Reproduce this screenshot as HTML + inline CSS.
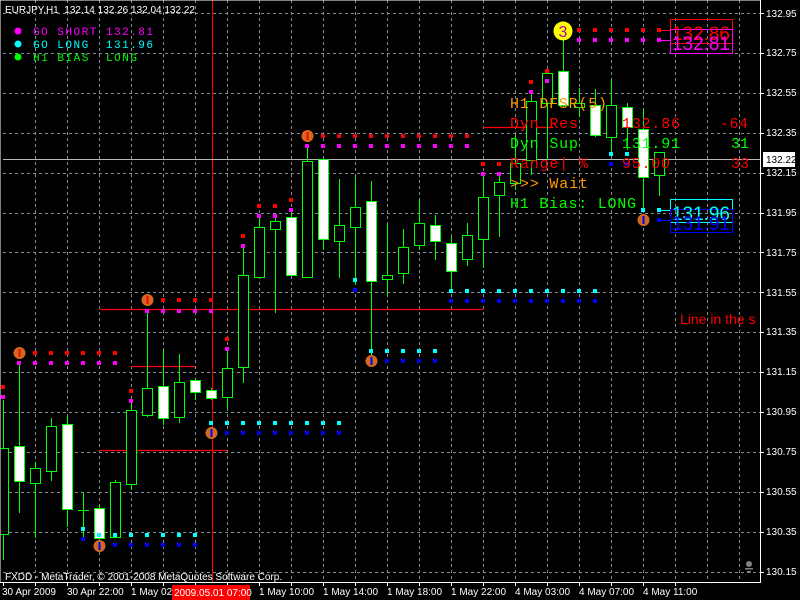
<!DOCTYPE html>
<html><head><meta charset="utf-8"><style>
html,body{margin:0;padding:0;background:#000;width:800px;height:600px;overflow:hidden}
svg{display:block}
text{white-space:pre}
.ax{font-family:"Liberation Sans",sans-serif;font-size:10px;fill:#fff}
.mono{font-family:"Liberation Mono",monospace}
</style></head><body>
<svg id="s" width="800" height="600" xmlns="http://www.w3.org/2000/svg">
<rect width="800" height="600" fill="#000"/>
<g id="grid" stroke="#7f8c99" stroke-dasharray="3,3" stroke-width="1"></g>
<line x1="212.5" y1="0" x2="212.5" y2="582" stroke="#ff0000"/>
<line x1="3" y1="159.5" x2="760" y2="159.5" stroke="#b8b8b8"/>
<g stroke="#ff0000" stroke-width="1.2">
<line x1="100" y1="309.5" x2="483" y2="309.5"/>
<line x1="131" y1="366.5" x2="195" y2="366.5"/>
<line x1="99" y1="450.5" x2="227" y2="450.5"/>
<line x1="483" y1="127.5" x2="553" y2="127.5"/>
<line x1="480" y1="213.5" x2="490" y2="213.5"/>
</g>
<g id="candles"></g>
<g id="dots"></g>
<!-- circles -->
<g id="circ"></g>
<circle cx="563" cy="31" r="9.5" fill="#ffff00"/>
<text x="563" y="37" text-anchor="middle" font-family="Liberation Sans,sans-serif" font-size="16" fill="#b000b0">3</text>

<!-- label boxes -->
<line x1="659" y1="30.5" x2="670" y2="30.5" stroke="#ff0000"/>
<line x1="659" y1="40.5" x2="670" y2="40.5" stroke="#ff00ff"/>
<rect x="670.5" y="19.5" width="62" height="24" fill="none" stroke="#ff0000"/>
<rect x="670.5" y="29.5" width="62" height="24" fill="none" stroke="#ff00ff"/>
<text x="672" y="40" font-family="Liberation Sans,sans-serif" font-size="19" fill="#ff0000" textLength="58">132.86</text>
<text x="672" y="50" font-family="Liberation Sans,sans-serif" font-size="19" fill="#ff00ff" textLength="58">132.81</text>
<line x1="659" y1="210.5" x2="670" y2="210.5" stroke="#00ffff"/>
<line x1="659" y1="220.5" x2="670" y2="220.5" stroke="#0000ff"/>
<rect x="670.5" y="199.5" width="62" height="23" fill="none" stroke="#00ffff"/>
<rect x="670.5" y="209.5" width="62" height="23" fill="none" stroke="#0000ff"/>
<text x="672" y="220" font-family="Liberation Sans,sans-serif" font-size="19" fill="#00ffff" textLength="58">131.96</text>
<text x="672" y="230" font-family="Liberation Sans,sans-serif" font-size="19" fill="#0000ff" textLength="58">131.91</text>

<!-- DFSR panel -->
<g class="mono" font-size="15">
<text x="510" y="108" fill="#ff9900" textLength="97">H1 DFSR(5)</text>
<text x="510" y="128" fill="#ff0000" textLength="68">Dyn Res</text>
<text x="622" y="128" fill="#ff0000" textLength="58">132.86</text>
<text x="720" y="128" fill="#ff0000" textLength="28">-64</text>
<text x="510" y="148" fill="#00ff00" textLength="68">Dyn Sup</text>
<text x="622" y="148" fill="#00ff00" textLength="58">131.91</text>
<text x="731" y="148" fill="#00ff00" textLength="18">31</text>
<text x="510" y="168" fill="#ff0000" textLength="78">Range| %</text>
<text x="622" y="168" fill="#ff0000" textLength="48">95.00</text>
<text x="731" y="168" fill="#ff0000" textLength="18">33</text>
<text x="510" y="188" fill="#ff9900" textLength="78">&gt;&gt;&gt; Wait</text>
<text x="510" y="208" fill="#00ff00" textLength="126">H1 Bias: LONG</text>
</g>
<text x="680" y="324" font-family="Liberation Sans,sans-serif" font-size="14" fill="#ff0000">Line in the s</text>

<!-- legend -->
<text x="5" y="13" class="ax" font-size="10">EURJPY,H1  132.14 132.26 132.04 132.22</text>
<circle cx="18" cy="31" r="3.5" fill="#ff00ff"/>
<circle cx="18" cy="44" r="3.5" fill="#00ffff"/>
<circle cx="18" cy="57" r="3.5" fill="#00ff00"/>
<g class="mono" font-size="11">
<text x="33" y="35" fill="#ff00ff" textLength="120">GO SHORT 132.81</text>
<text x="33" y="48" fill="#00ffff" textLength="120">GO LONG  131.96</text>
<text x="33" y="61" fill="#00ff00" textLength="104">H1 BIAS  LONG</text>
</g>

<!-- borders -->
<rect x="0" y="0" width="760.5" height="582.5" fill="none" stroke="#fff" stroke-width="1"/>
<text x="5" y="580" class="ax" font-size="9.5">FXDD - MetaTrader, © 2001-2008 MetaQuotes Software Corp.</text>
<g fill="#808080"><circle cx="749" cy="564" r="3"/><rect x="745" y="568" width="8" height="1.5"/><rect x="747" y="571" width="4" height="1.5"/></g>

<!-- axis -->
<g id="ticks" stroke="#fff"></g>
<g class="ax">
<text x="766" y="17">132.95</text><text x="766" y="56">132.75</text><text x="766" y="96">132.55</text>
<text x="766" y="136">132.35</text><text x="766" y="176">132.15</text><text x="766" y="216">131.95</text>
<text x="766" y="256">131.75</text><text x="766" y="296">131.55</text><text x="766" y="335">131.35</text>
<text x="766" y="375">131.15</text><text x="766" y="415">130.95</text><text x="766" y="455">130.75</text>
<text x="766" y="495">130.55</text><text x="766" y="535">130.35</text><text x="766" y="575">130.15</text>
</g>
<rect x="763" y="152" width="32" height="15" fill="#fff"/>
<text x="766" y="163" class="ax" style="fill:#000">132.22</text>
<g class="ax">
<text x="2" y="595">30 Apr 2009</text>
<text x="67" y="595">30 Apr 22:00</text>
<text x="131" y="595">1 May 02:</text>
<text x="259" y="595">1 May 10:00</text>
<text x="323" y="595">1 May 14:00</text>
<text x="387" y="595">1 May 18:00</text>
<text x="451" y="595">1 May 22:00</text>
<text x="515" y="595">4 May 03:00</text>
<text x="579" y="595">4 May 07:00</text>
<text x="643" y="595">4 May 11:00</text>
</g>
<rect x="172" y="585" width="78" height="15" fill="#ff0000"/>
<text x="174" y="596" class="ax">2009.05.01 07:00</text>
</svg>
<script>
var NS="http://www.w3.org/2000/svg";
function el(p,t,a){var e=document.createElementNS(NS,t);for(var k in a)e.setAttribute(k,a[k]);document.getElementById(p).appendChild(e);return e;}
// grid
for(var k=1;k<=23;k++){var x=3+32*k+0.5;el("grid","line",{x1:x,y1:0,x2:x,y2:582});}
for(var k=0;k<15;k++){var y=Math.round(13+39.9*k)+0.5;el("grid","line",{x1:3,y1:y,x2:760,y2:y});}
// ticks
for(var k=0;k<15;k++){var y=Math.round(13+39.9*k)+0.5;el("ticks","line",{x1:760,y1:y,x2:764,y2:y});}
for(var k=0;k<=21;k++){var x=3+32*k+0.5;el("ticks","line",{x1:x,y1:582,x2:x,y2:586});}
// candles: x, high, low, top, bottom, white
var C=[[3,400,560,448,534,0],[19,363,513,446,481,1],[35,462,538,468,483,0],[51,418,481,426,471,0],[67,416,527,424,509,1],
[83,492,537,510,510,0],[99,505,545,508,538,1],[115,480,537,482,537,0],[131,400,490,410,484,0],[147,311,417,388,415,0],
[163,350,425,386,418,1],[179,354,423,382,417,0],[195,378,400,380,392,1],[211,388,400,390,398,1],[227,349,409,368,397,0],
[243,246,383,275,367,0],[259,216,277,227,277,0],[275,216,313,221,229,0],[291,210,277,217,275,1],[307,146,277,161,277,0],
[323,159,250,159,239,1],[339,179,278,225,241,0],[355,177,285,207,227,0],[371,181,355,201,281,1],[387,224,295,275,279,0],
[403,229,284,247,273,0],[419,199,250,223,245,0],[435,215,260,225,241,1],[451,237,290,243,271,1],[467,223,266,235,259,0],
[483,174,268,197,239,0],[499,174,237,182,195,0],[515,135,190,163,183,0],[531,92,175,101,160,0],[547,82,160,73,103,0],
[563,40,107,71,105,1],[579,88,117,103,107,0],[595,89,137,105,135,1],[611,79,154,105,137,0],[627,103,150,107,127,1],
[643,109,210,129,177,1],[659,152,196,152,175,0]];
C.forEach(function(c){var x=c[0]+0.5;
el("candles","line",{x1:x,y1:c[1],x2:x,y2:c[2],stroke:"#00ff00"});
if(c[3]==c[4]){el("candles","line",{x1:c[0]-5,y1:c[3]+0.5,x2:c[0]+6,y2:c[3]+0.5,stroke:"#00ff00"});}
else el("candles","rect",{x:c[0]-4.5,y:c[3]+0.5,width:10,height:c[4]-c[3],fill:c[5]?"#fff":"#000",stroke:"#00ff00"});});
function dot(x,y,col){el("dots","rect",{x:x-2,y:y-2,width:4,height:4,fill:col});}
function row(x0,x1,y,c){for(var x=x0;x<=x1;x+=16)dot(x,y,c);}
// resistance rows
row(35,115,353,"#ff0000");row(19,115,363,"#ff00ff");
row(163,211,300,"#ff0000");row(147,211,311,"#ff00ff");
row(323,467,136,"#ff0000");row(307,467,146,"#ff00ff");
row(579,659,30,"#ff0000");row(579,659,40,"#ff00ff");
[[3,387],[131,391],[227,339],[243,236],[259,206],[275,206],[291,200],[483,164],[499,164],[531,82],[547,71]].forEach(function(p){dot(p[0],p[1],"#ff0000");dot(p[0],p[1]+10,"#ff00ff");});
// support rows
dot(83,529,"#00ffff");dot(83,539,"#0000ff");
row(99,195,535,"#00ffff");row(115,195,545,"#0000ff");
row(211,339,423,"#00ffff");row(227,339,433,"#0000ff");
dot(355,280,"#00ffff");dot(355,290,"#0000ff");
row(371,435,351,"#00ffff");row(387,435,361,"#0000ff");
row(451,595,291,"#00ffff");row(451,595,301,"#0000ff");
row(611,627,154,"#00ffff");row(611,627,164,"#0000ff");
row(643,659,210,"#00ffff");dot(659,220,"#0000ff");
// orange circles
[[19,353,"#ff0000"],[147,300,"#ff0000"],[307,136,"#ff0000"],[99,546,"#0000ff"],[211,433,"#0000ff"],[371,361,"#0000ff"],[643,220,"#0000ff"]].forEach(function(p){
el("circ","circle",{cx:p[0]+0.5,cy:p[1],r:6,fill:"#d2691e"});
el("circ","rect",{x:p[0]-0.5,y:p[1]-4,width:2,height:8,fill:p[2]});});
</script>
</body></html>
